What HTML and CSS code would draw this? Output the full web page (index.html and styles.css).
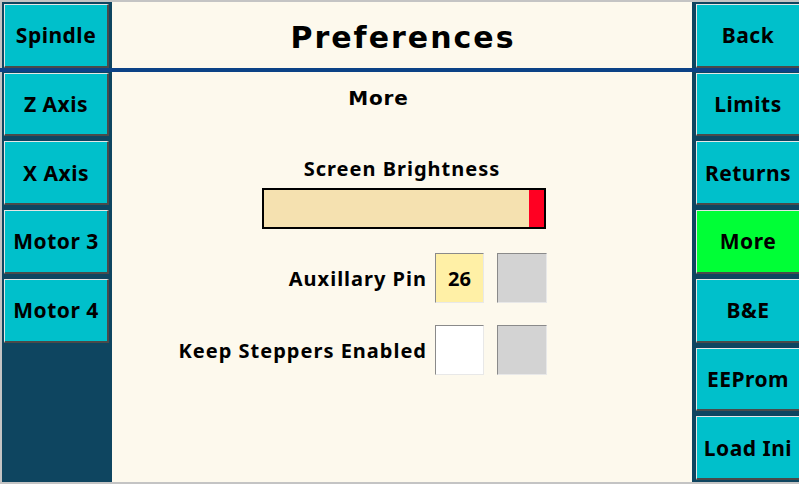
FILE: index.html
```html
<!DOCTYPE html>
<html>
<head>
<meta charset="utf-8">
<link rel="stylesheet" href="styles.css">
</head>
<body>
<div class="app">
  <nav class="panel panel-left">
    <div class="btn">Spindle</div>
    <div class="btn">Z Axis</div>
    <div class="btn">X Axis</div>
    <div class="btn">Motor 3</div>
    <div class="btn">Motor 4</div>
  </nav>
  <main class="center">
    <header class="header"><h1 class="title">Preferences</h1></header>
    <section class="content">
      <div class="subtitle">More</div>
      <div class="label-center">Screen Brightness</div>
      <div class="bar"><div class="bar-fill"></div><div class="bar-knob"></div></div>
      <div class="row row-aux">
        <span class="row-label">Auxillary Pin</span>
        <span class="box box-yellow">26</span>
        <span class="box box-gray"></span>
      </div>
      <div class="row row-keep">
        <span class="row-label">Keep Steppers Enabled</span>
        <span class="box box-white"></span>
        <span class="box box-gray"></span>
      </div>
    </section>
  </main>
  <nav class="panel panel-right">
    <div class="btn">Back</div>
    <div class="btn">Limits</div>
    <div class="btn">Returns</div>
    <div class="btn btn-active">More</div>
    <div class="btn">B&amp;E</div>
    <div class="btn">EEProm</div>
    <div class="btn">Load Ini</div>
  </nav>
  <div class="rule"></div>
</div>
</body>
</html>
```
FILE: styles.css
```css
html, body {
  margin: 0;
  padding: 0;
}
body {
  width: 799px;
  height: 484px;
  overflow: hidden;
  background: #c4c4c4;
  font-family: "Noto Sans", "Open Sans", sans-serif;
  color: #000;
}
.app {
  position: relative;
  box-sizing: border-box;
  width: 799px;
  height: 484px;
  padding: 2px 0 2px 2px;
  display: grid;
  grid-template-columns: 110px 1fr 107px;
}
.panel {
  background: #0e4560;
  display: grid;
  grid-template-rows: repeat(7, 1fr);
  row-gap: 5px;
  padding: 2px 0;
  box-sizing: border-box;
  height: 480px;
}
.panel-left {
  padding-left: 2px;
  padding-right: 3px;
}
.panel-right {
  padding-left: 4px;
}
.btn {
  background: #00c0cb;
  border-top: 1px solid #e6e6e6;
  border-left: 1px solid #e6e6e6;
  border-bottom: 2px solid #4a4a4a;
  border-right: 2px solid #4a4a4a;
  display: flex;
  align-items: center;
  justify-content: center;
  font-weight: 700;
  font-size: 21px;
  letter-spacing: 0.5px;
  white-space: nowrap;
}
.panel-right .btn {
  border-right: none;
}
.btn-active {
  background: #00ff36;
}
.center {
  background: #fdf9ed;
  display: flex;
  flex-direction: column;
  height: 480px;
}
.header {
  height: 66px;
  display: flex;
  align-items: center;
  justify-content: center;
}
.title {
  margin: 0;
  font-family: "DejaVu Sans", "Liberation Sans", sans-serif;
  font-weight: 700;
  font-size: 30px;
  letter-spacing: 2px;
  line-height: 36px;
  padding-top: 5px;
  padding-left: 2px;
}
.rule {
  position: absolute;
  left: 0;
  right: 0;
  top: 68px;
  height: 4px;
  background: #0b4286;
}
.content {
  padding-top: 4px;
  display: flex;
  flex-direction: column;
}
.subtitle {
  font-family: "DejaVu Sans", "Liberation Sans", sans-serif;
  font-weight: 700;
  font-size: 20px;
  letter-spacing: 0.8px;
  line-height: 24px;
  margin-top: 14px;
  text-align: center;
  padding-right: 47px;
}
.label-center {
  margin-top: 47px;
  font-weight: 700;
  font-size: 20px;
  letter-spacing: 1px;
  line-height: 24px;
  text-align: center;
}
.bar {
  margin-top: 7px;
  margin-left: 150px;
  width: 284px;
  height: 41px;
  box-sizing: border-box;
  border: 2px solid #000;
  background: #f5e1b0;
  display: flex;
}
.bar-fill {
  flex: 1;
}
.bar-knob {
  width: 15px;
  background: #ff0022;
}
.row {
  display: flex;
  align-items: center;
  width: 435px;
  height: 50px;
}
.row-aux {
  margin-top: 24px;
}
.row-keep {
  margin-top: 22px;
}
.row-label {
  flex: 1;
  text-align: right;
  white-space: nowrap;
  font-weight: 700;
  font-size: 20px;
  letter-spacing: 1px;
  margin-right: 8px;
}
.box {
  box-sizing: border-box;
  width: 49px;
  height: 50px;
  border-top: 1px solid #8a8a8a;
  border-left: 1px solid #8a8a8a;
  border-right: 1px solid #e8e8e8;
  border-bottom: 1px solid #e8e8e8;
  display: flex;
  align-items: center;
  justify-content: center;
  font-weight: 700;
  font-size: 20px;
}
.box-yellow {
  background: #fff0a6;
}
.box-white {
  background: #ffffff;
}
.box-gray {
  background: #d3d3d3;
  width: 50px;
  margin-left: 13px;
}
```
